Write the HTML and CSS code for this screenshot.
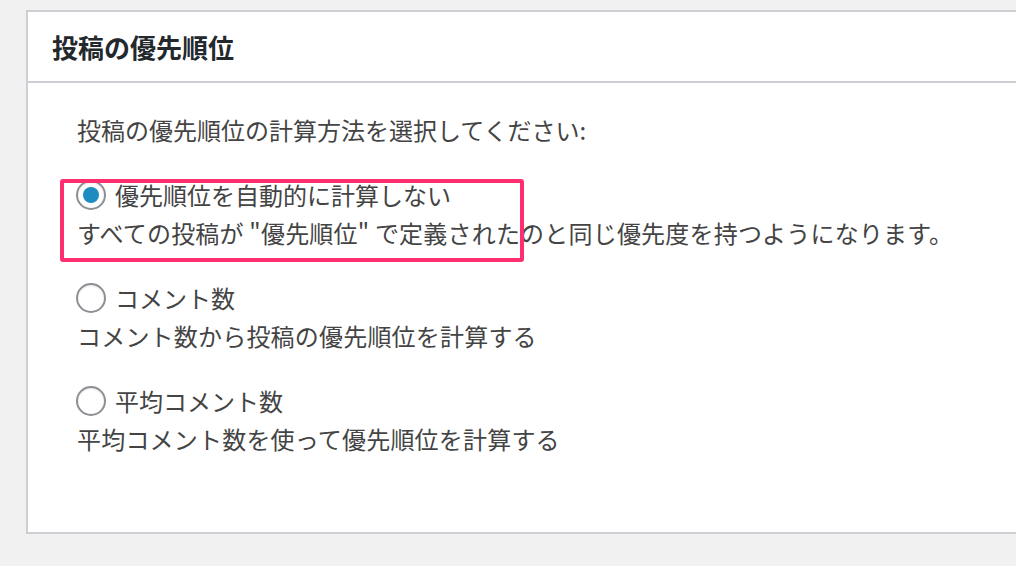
FILE: index.html
```html
<!DOCTYPE html>
<html lang="ja">
<head>
    <meta charset="UTF-8">
    <title>投稿の優先順位</title>
    <link rel="stylesheet" href="styles.css">
</head>
<body>
<div class="wrap">
    <div class="postbox">
        <h2 class="postbox-title">投稿の優先順位</h2>
        <div class="inside">
            <p class="intro">投稿の優先順位の計算方法を選択してください:</p>
            <div class="option">
                <label class="option-label">
                    <input type="radio" name="priority" value="none" checked>
                    <span class="radio"></span>
                    <span>優先順位を自動的に計算しない</span>
                </label>
                <p class="option-desc">すべての投稿が "優先順位" で定義されたのと同じ優先度を持つようになります。</p>
                <div class="highlight"></div>
            </div>
            <div class="option">
                <label class="option-label">
                    <input type="radio" name="priority" value="comments">
                    <span class="radio"></span>
                    <span>コメント数</span>
                </label>
                <p class="option-desc">コメント数から投稿の優先順位を計算する</p>
            </div>
            <div class="option">
                <label class="option-label">
                    <input type="radio" name="priority" value="average">
                    <span class="radio"></span>
                    <span>平均コメント数</span>
                </label>
                <p class="option-desc">平均コメント数を使って優先順位を計算する</p>
            </div>
        </div>
    </div>
</div>
</body>
</html>
```

FILE: styles.css
```css
* {
    box-sizing: border-box;
}

html, body {
    margin: 0;
    padding: 0;
    background: #f1f1f1;
}

body {
    font-family: "Noto Sans CJK JP", "Liberation Sans", sans-serif;
    color: #444;
}

.wrap {
    padding: 10px 0 0 26px;
}

.postbox {
    background: #fff;
    border: 2px solid #ccd0d4;
    border-right: none;
    box-shadow: 0 1px 1px rgba(0, 0, 0, 0.04);
}

.postbox-title {
    margin: 0;
    height: 71px;
    padding: 0 0 0 24px;
    display: flex;
    align-items: center;
    font-size: 26px;
    font-weight: bold;
    color: #23282d;
    border-bottom: 2px solid #ccd0d4;
}

.inside {
    padding: 28px 0 74px 49px;
    font-size: 24px;
    line-height: 38px;
}

.intro {
    margin: 0;
}

.option {
    position: relative;
    margin-top: 27px;
}

.option-label {
    display: flex;
    align-items: center;
    height: 38px;
    cursor: pointer;
}

.option-label input {
    display: none;
}

.radio {
    width: 30px;
    height: 30px;
    margin: 0 9px 0 -1px;
    border: 2px solid #8c8f94;
    border-radius: 50%;
    box-shadow: inset 0 1px 2px rgba(0, 0, 0, 0.1);
    display: flex;
    align-items: center;
    justify-content: center;
}

.option-label input:checked + .radio::before {
    content: "";
    width: 16px;
    height: 16px;
    border-radius: 50%;
    background: #1e8cbe;
}

.option-desc {
    margin: 0;
    letter-spacing: 0.2px;
}

.highlight {
    position: absolute;
    left: -17px;
    top: 3px;
    width: 464px;
    height: 83px;
    border: 4px solid #ff2e6f;
    border-radius: 3px;
    pointer-events: none;
}
```
